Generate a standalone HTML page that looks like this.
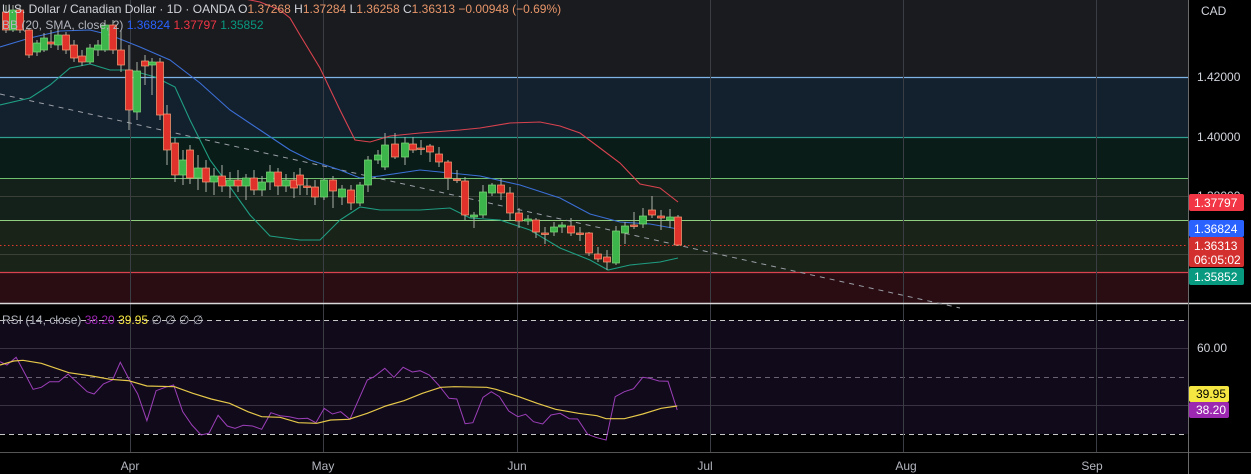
<!DOCTYPE html>
<html><head><meta charset="utf-8"><style>
html,body{margin:0;padding:0;background:#000;}
body{width:1251px;height:474px;overflow:hidden;position:relative;font-family:"Liberation Sans",sans-serif;}
svg{position:absolute;left:0;top:0}
.t{font-size:12px;}
</style></head><body>
<svg id="s" width="1251" height="474" xmlns="http://www.w3.org/2000/svg">
<rect x="0" y="0" width="1188" height="77" fill="#1a1b1e"/>
<rect x="0" y="77" width="1188" height="60" fill="#13202e"/>
<rect x="0" y="137" width="1188" height="41" fill="#091c18"/>
<rect x="0" y="178" width="1188" height="42" fill="#14201a"/>
<rect x="0" y="220" width="1188" height="52" fill="#1a2318"/>
<rect x="0" y="272" width="1188" height="31" fill="#2a0d13"/>
<line x1="0" y1="77.5" x2="1188" y2="77.5" stroke="#7fb4e6" stroke-width="1.2"/>
<line x1="0" y1="137.5" x2="1188" y2="137.5" stroke="#2f9f8f" stroke-width="1.2"/>
<line x1="0" y1="178.5" x2="1188" y2="178.5" stroke="#6fbf6f" stroke-width="1"/>
<line x1="0" y1="220.5" x2="1188" y2="220.5" stroke="#8fcf7f" stroke-width="1"/>
<line x1="0" y1="196.5" x2="1188" y2="196.5" stroke="#3a4038" stroke-width="1"/>
<line x1="0" y1="254.5" x2="1188" y2="254.5" stroke="#3a4038" stroke-width="1"/>
<line x1="0" y1="272.5" x2="1188" y2="272.5" stroke="#d9434f" stroke-width="1.2"/>
<line x1="0" y1="245.5" x2="1188" y2="245.5" stroke="#e0392f" stroke-width="1" stroke-dasharray="1.5,2.5"/>
<rect x="0" y="320" width="1188" height="114" fill="#110a1b"/>
<line x1="0" y1="348.5" x2="1188" y2="348.5" stroke="#3a3244"/>
<line x1="0" y1="405.5" x2="1188" y2="405.5" stroke="#3a3244"/>
<line x1="0" y1="377.5" x2="1188" y2="377.5" stroke="#6a6272" stroke-dasharray="5,4"/>
<line x1="0" y1="320.5" x2="1188" y2="320.5" stroke="#c8c8c8" stroke-dasharray="5,4"/>
<line x1="0" y1="434.5" x2="1188" y2="434.5" stroke="#c8c8c8" stroke-dasharray="5,4"/>
<g stroke="#3a3d44" stroke-width="1" id="vg"></g>
<line x1="0" y1="303.5" x2="1251" y2="303.5" stroke="#d8d8d8" stroke-width="1.5"/>
<line x1="0" y1="452.5" x2="1251" y2="452.5" stroke="#555"/>
<line x1="1188.5" y1="0" x2="1188.5" y2="474" stroke="#6a6a6a"/>
<line x1="0" y1="94" x2="960" y2="308" stroke="#9a9ea6" stroke-width="1" stroke-dasharray="5,5"/>
<g id="bb" fill="none" stroke-width="1.1"></g>
<g id="cd"></g>
<g id="rsi" fill="none"></g>
<text class="t" x="2" y="13" fill="#d1d4dc">U.S. Dollar / Canadian Dollar · 1D · OANDA  <tspan fill="#d1d4dc">O</tspan><tspan fill="#e8966a">1.37268</tspan>  <tspan fill="#d1d4dc">H</tspan><tspan fill="#e8966a">1.37284</tspan>  <tspan fill="#d1d4dc">L</tspan><tspan fill="#e8966a">1.36258</tspan>  <tspan fill="#d1d4dc">C</tspan><tspan fill="#e8966a">1.36313  −0.00948 (−0.69%)</tspan></text>
<text class="t" x="2" y="29" fill="#b2b5be">BB (20, SMA, close, 2) <tspan fill="#2962ff">1.36824</tspan>  <tspan fill="#f23645">1.37797</tspan>  <tspan fill="#089981">1.35852</tspan></text>
<text class="t" x="2" y="324" fill="#b2b5be">RSI (14, close) <tspan fill="#9c27b0">38.20</tspan> <tspan fill="#f5e642">39.95</tspan> <tspan fill="#b2b5be">∅ ∅ ∅ ∅</tspan></text>
<g class="t" fill="#d1d4dc">
<text x="1201" y="15">CAD</text>
<text x="1197" y="81">1.42000</text>
<text x="1197" y="141">1.40000</text>
<text x="1197" y="200">1.38000</text>
<text x="1197" y="352">60.00</text>
</g>
<rect x="1189" y="194" width="55" height="17" rx="2" fill="#f23645"/>
<text class="t" x="1194" y="207" fill="#fff">1.37797</text>
<rect x="1189" y="220" width="55" height="17" rx="2" fill="#2962ff"/>
<text class="t" x="1194" y="233" fill="#fff">1.36824</text>
<rect x="1189" y="237" width="55" height="30" rx="2" fill="#d32f2f"/>
<text class="t" x="1194" y="250" fill="#fff">1.36313</text>
<text class="t" x="1194" y="264" fill="#fff">06:05:02</text>
<rect x="1189" y="268" width="55" height="17" rx="2" fill="#089981"/>
<text class="t" x="1194" y="281" fill="#fff">1.35852</text>
<rect x="1189" y="386" width="40" height="16" rx="2" fill="#f5e642"/>
<text class="t" x="1196" y="398" fill="#000">39.95</text>
<rect x="1189" y="402" width="40" height="16" rx="2" fill="#9c27b0"/>
<text class="t" x="1196" y="414" fill="#fff">38.20</text>
<g class="t" fill="#b2b5be" text-anchor="middle">
<text x="130" y="470">Apr</text><text x="323" y="470">May</text><text x="517" y="470">Jun</text>
<text x="705" y="470">Jul</text><text x="906" y="470">Aug</text><text x="1092" y="470">Sep</text>
</g>
</svg>
<script>
var NS="http://www.w3.org/2000/svg";
function el(p,t,a){var e=document.createElementNS(NS,t);for(var k in a)e.setAttribute(k,a[k]);p.appendChild(e);return e;}
var vg=document.getElementById('vg');
[130,323,517,710,903,1096].forEach(function(x){el(vg,'line',{x1:x+.5,y1:0,x2:x+.5,y2:452});});
var bb=document.getElementById('bb');
function pl(pts,c,w,p){el(p||bb,'polyline',{points:pts.map(function(q){return q.join(',')}).join(' '),stroke:c,'stroke-width':w||1.1,fill:'none'});}
pl([[240,-2],[260,2],[280,10],[290,18],[300,35],[320,68],[340,110],[355,140],[370,142],[390,136],[420,133],[460,130],[480,128],[510,123],[540,122],[560,126],[580,133],[600,148],[620,163],[640,184],[660,188],[678,202]],'#d9434f');
pl([[0,47],[30,38],[60,31],[90,30],[110,35],[140,47],[170,60],[200,83],[230,110],[260,130],[290,150],[310,160],[340,170],[360,178],[380,176],[420,170],[440,172],[480,176],[520,185],[560,198],[590,214],[620,222],[650,224],[678,229]],'#3b6fd6');
pl([[0,105],[30,98],[50,85],[70,68],[90,64],[110,70],[130,70],[155,77],[175,87],[190,120],[210,160],[230,187],[250,215],[270,236],[300,240],[320,240],[340,220],[360,207],[380,210],[420,210],[450,208],[470,218],[500,220],[530,230],[560,248],[590,260],[608,270],[630,265],[660,262],[678,258]],'#1f9e82');
var cd=document.getElementById('cd');
var C=[[6,12,30,5,33],[13,30,10,5,32],[20,10,30,6,33],[29,30,55,28,58],[37,52,43,40,56],[44,50,38,33,52],[51,42,44,30,48],[58,45,35,28,50],[66,35,50,32,54],[74,45,58,40,62],[82,56,62,50,66],[90,62,48,44,64],[98,50,45,40,56],[105,50,25,20,52],[113,25,50,20,54],[121,50,65,30,72],[129,70,110,45,130],[137,112,71,62,120],[145,61,66,55,85],[152,65,62,58,95],[160,62,115,58,120],[167,114,150,105,165],[175,143,175,138,182],[183,175,160,150,185],[190,150,178,145,184],[198,178,168,155,190],[206,168,182,160,192],[214,182,176,168,195],[222,176,186,165,192],[230,186,180,172,198],[238,180,186,170,192],[246,186,178,174,200],[254,178,190,170,195],[262,190,182,176,196],[270,182,172,165,190],[278,172,186,168,195],[286,186,180,174,192],[294,180,188,172,198],[300,175,185,168,195],[307,186,186,178,195],[315,187,197,180,205],[324,197,180,178,200],[333,180,191,176,208],[342,197,189,185,205],[351,190,203,185,210],[360,203,185,182,206],[368,185,160,156,192],[378,160,155,150,164],[385,167,145,133,170],[395,144,157,133,159],[405,157,143,137,165],[413,144,150,137,153],[421,148,148,140,155],[430,146,152,144,162],[439,154,162,147,167],[448,162,178,160,190],[457,179,179,170,183],[465,181,215,177,220],[474,217,215,212,228],[483,215,192,185,218],[492,193,185,183,196],[501,185,193,178,200],[510,193,213,187,220],[519,213,221,208,228],[528,221,219,215,225],[536,220,232,218,238],[545,233,233,227,244],[554,232,227,222,236],[562,227,225,222,233],[571,226,233,218,236],[580,233,233,227,241],[589,233,253,232,256],[598,254,259,247,262],[607,257,262,250,270],[616,263,231,226,265],[625,233,226,222,244],[634,225,225,212,229],[643,224,216,208,228],[652,210,215,196,218],[661,216,218,210,230],[670,220,217,209,228],[678,217,245,215,246]];
C.forEach(function(c){var up=c[2]<c[1];var col=up?'#3cb54a':'#e0322a';var bd=up?'#7fdc7a':'#f7a27a';
el(cd,'line',{x1:c[0],y1:c[3],x2:c[0],y2:c[4],stroke:'#aab0a8','stroke-width':1});
var t=Math.min(c[1],c[2]),h=Math.max(Math.abs(c[1]-c[2]),1.5);
el(cd,'rect',{x:c[0]-3.5,y:t,width:7,height:h,fill:col,stroke:bd,'stroke-width':0.7});});
var rs=document.getElementById('rsi');
function cv(a){return a.map(function(q){return [(q[0]/2.178).toFixed(1),(q[1]/3+300).toFixed(1)];});}
pl(cv([[0,185],[15,195],[35,172],[50,210],[72,268],[90,262],[108,245],[128,245],[148,222],[170,250],[190,275],[205,282],[225,252],[245,240],[262,187],[282,240],[300,282],[320,362],[340,272],[360,262],[378,255],[398,335],[418,375],[438,405],[455,400],[475,346],[495,378],[512,385],[530,376],[550,378],[570,388],[590,338],[610,347],[630,350],[650,356],[670,355],[688,368],[706,325],[724,342],[742,335],[762,358],[800,240],[815,230],[838,205],[858,232],[878,202],[898,216],[915,212],[935,225],[955,255],[978,295],[995,297],[1013,371],[1030,368],[1052,292],[1070,275],[1088,290],[1108,333],[1128,350],[1145,343],[1162,365],[1182,372],[1200,345],[1220,340],[1240,356],[1258,357],[1280,403],[1300,413],[1320,420],[1340,290],[1360,275],[1380,266],[1400,232],[1415,235],[1435,243],[1455,244],[1475,330]]),'#9c3fb8',1,rs);
pl(cv([[0,195],[30,183],[50,181],[90,190],[150,218],[200,228],[240,238],[280,242],[320,258],[380,260],[420,280],[460,297],[500,310],[540,335],[570,350],[610,352],[650,368],[690,370],[720,360],[760,358],[800,340],[840,318],[880,302],[920,280],[960,262],[990,260],[1060,262],[1080,268],[1130,290],[1170,310],[1210,328],[1260,340],[1300,347],[1320,356],[1360,356],[1400,342],[1440,325],[1475,318]]),'#e6c84a',1.2,rs);
</script>
</body></html>
